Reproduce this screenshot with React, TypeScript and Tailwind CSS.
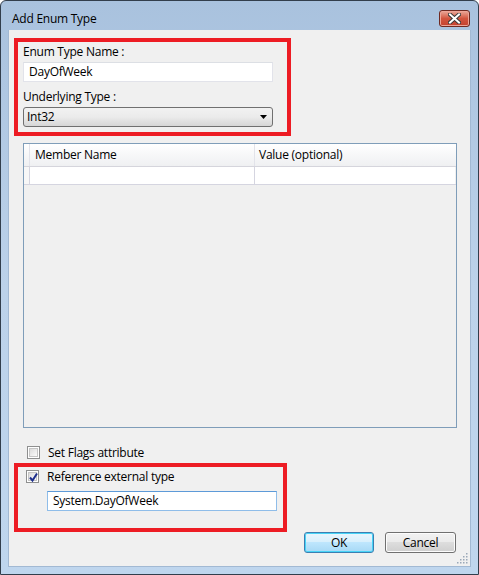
const font = { fontFamily: '"Open Sans", "Noto Sans", sans-serif' };

function CheckBox({ checked }: { checked?: boolean }) {
  return (
    <div className="w-[13px] h-[13px] border border-[#8e8f8f] bg-white p-px shrink-0">
      <div className="w-full h-full border border-[#c5c5c5] bg-gradient-to-br from-[#dcdcdc] to-[#fbfbfb] relative">
        {checked && (
          <svg className="absolute -left-px -top-px" width="11" height="11" viewBox="0 0 11 11">
            <path d="M2 5.5 L4.5 8.5 L9 1.5" fill="none" stroke="#1e2f8c" strokeWidth="2" />
          </svg>
        )}
      </div>
    </div>
  );
}

function Button({ label, primary }: { label: string; primary?: boolean }) {
  return (
    <button
      className={
        "h-[21px] rounded-[3px] border text-[12px] text-black leading-none " +
        (primary
          ? "w-[70px] border-[#3c7fb1] shadow-[inset_0_0_0_1px_#48d4f7]"
          : "w-[71px] border-[#707070] shadow-[inset_0_0_0_1px_#fcfcfc]")
      }
      style={{
        background: primary
          ? "linear-gradient(#eaf6fd 0%, #d9f0fc 45%, #bee6fd 50%, #a7d9f5 100%)"
          : "linear-gradient(#f2f2f2 0%, #ebebeb 45%, #dddddd 50%, #cfcfcf 100%)",
      }}
    >
      {label}
    </button>
  );
}

export default function App() {
  return (
    <div
      className="w-[479px] h-[575px] border border-[#323e4c] rounded-t-[6px] bg-gradient-to-b from-[#a9c2de] via-[#bcd2ea] to-[#bfd6ee] flex flex-col overflow-hidden text-black tracking-[-0.25px]"
      style={font}
    >
      {/* title bar */}
      <div className="h-[29px] flex items-start shrink-0">
        <span className="text-[12px] ml-[11px] mt-[10px] leading-[16px]">Add Enum Type</span>
        <div className="ml-auto mr-[8px] mt-[9px] w-[31px] h-[17px] rounded-[3px] border border-[#6f2a22] bg-gradient-to-b from-[#e9a99b] via-[#d2553f] to-[#c4412e] flex items-center justify-center shadow-[inset_0_0_0_1px_#eda598]">
          <svg width="13" height="11" viewBox="0 0 13 11">
            <path d="M2 1.5 L11 9.5 M11 1.5 L2 9.5" stroke="#3b3b3b" strokeWidth="4" strokeLinecap="square" />
            <path d="M2 1.5 L11 9.5 M11 1.5 L2 9.5" stroke="#ffffff" strokeWidth="2" strokeLinecap="square" />
          </svg>
        </div>
      </div>

      {/* client */}
      <div className="mx-[7px] flex-1 bg-[#f0f0f0] border-l border-r border-b border-[#a2b9d3] flex flex-col relative">
        <div className="ml-[5px] mt-[8px] w-[277px] h-[98px] border-4 border-[#ed1c24] pl-[5px] pt-[1px]">
          <div className="text-[12px] leading-[18px]">Enum Type Name :</div>
          <div className="mt-[1px] w-[250px] h-[20px] bg-white border border-[#e2e3ea] border-t-[#dcdfe4] text-[12px] leading-[18px] pl-[5px]">
            DayOfWeek
          </div>
          <div className="mt-[6px] text-[12px] leading-[18px]">Underlying Type :</div>
          <div className="mt-px w-[250px] h-[20px] rounded-[3px] border border-[#707070] bg-gradient-to-b from-[#f2f2f2] via-[#ebebeb] to-[#d6d6d6] flex items-center pl-[3px] pr-[5px] text-[12px]">
            <span>Int32</span>
            <svg className="ml-auto" width="7" height="4" viewBox="0 0 7 4">
              <path d="M0 0 H7 L3.5 4 Z" fill="#000" />
            </svg>
          </div>
        </div>

        {/* member grid */}
        <div className="ml-[14px] mt-[7px] w-[434px] h-[285px] border border-[#7f9db9] bg-[#f0f0f0] flex flex-col">
          <div className="flex h-[23px] border-b border-[#d5d5dc] bg-gradient-to-b from-white to-[#eff0f2] text-[12px]">
            <div className="w-[6px] border-r border-[#e2e3ea]" />
            <div className="w-[225px] border-r border-[#e2e3ea] pl-[5px] leading-[22px]">Member Name</div>
            <div className="flex-1 pl-[4px] leading-[22px]">Value (optional)</div>
          </div>
          <div className="flex h-[18px] border-b border-[#d5d5e0]">
            <div className="w-[6px] border-r border-[#d5d5e0] bg-[#f7f7f7]" />
            <div className="w-[225px] border-r border-[#d5d5e0] bg-white" />
            <div className="flex-1 bg-white mr-px" />
          </div>
        </div>

        <div className="ml-[18px] mt-[18px] flex items-center gap-[8px] h-[13px]">
          <CheckBox />
          <span className="text-[12px] leading-none">Set Flags attribute</span>
        </div>

        <div className="ml-[5px] mt-[4px] w-[273px] h-[69px] border-4 border-[#ed1c24] pl-[8px] pt-[3px]">
          <div className="flex items-center gap-[8px] h-[13px]">
            <CheckBox checked />
            <span className="text-[12px] leading-none">Reference external type</span>
          </div>
          <div className="ml-[21px] mt-[8px] w-[230px] h-[20px] bg-white border border-[#8fbde9] border-t-[#5d9ad8] text-[12px] leading-[18px] pl-[5px]">
            System.DayOfWeek
          </div>
        </div>

        <div className="flex justify-end gap-[11px] mr-[14px]">
          <Button label="OK" primary />
          <Button label="Cancel" />
        </div>

        <svg className="absolute right-[2px] bottom-[2px]" width="11" height="11" viewBox="0 0 11 11">
          {[
            [9, 1],
            [9, 4],
            [6, 4],
            [9, 7],
            [6, 7],
            [3, 7],
            [9, 10],
            [6, 10],
            [3, 10],
            [0, 10],
          ].map(([x, y], i) => (
            <rect key={i} x={x} y={y - 1} width="1.5" height="1.5" fill="#9aa8b8" />
          ))}
        </svg>
      </div>
      <div className="h-[7px] shrink-0" />
    </div>
  );
}
